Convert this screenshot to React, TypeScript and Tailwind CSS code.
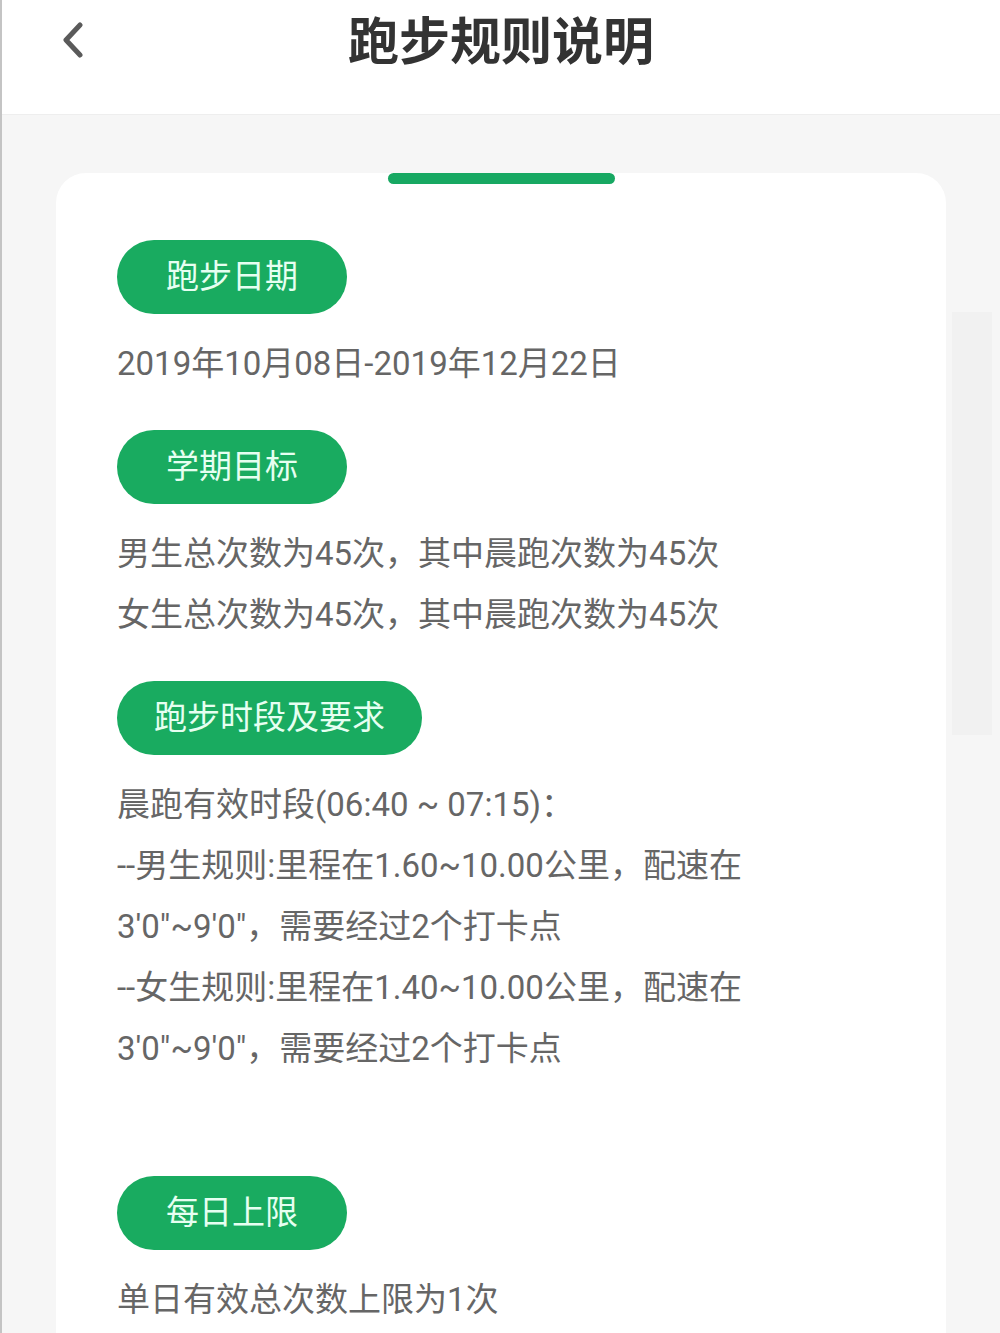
import React from "react";

const font = { fontFamily: '"Roboto", "Noto Sans CJK SC", sans-serif' };

const sections: { tag: string; wide?: boolean; lines: string[]; gapAfter?: boolean }[] = [
  { tag: "跑步日期", lines: ["2019年10月08日-2019年12月22日"] },
  { tag: "学期目标", lines: ["男生总次数为45次，其中晨跑次数为45次", "女生总次数为45次，其中晨跑次数为45次"] },
  {
    tag: "跑步时段及要求",
    wide: true,
    lines: [
      "晨跑有效时段(06:40 ~ 07:15)：",
      "--男生规则:里程在1.60~10.00公里，配速在",
      "3'0\"~9'0\"，需要经过2个打卡点",
      "--女生规则:里程在1.40~10.00公里，配速在",
      "3'0\"~9'0\"，需要经过2个打卡点",
    ],
    gapAfter: true,
  },
  { tag: "每日上限", lines: ["单日有效总次数上限为1次"] },
];

export default function App() {
  return (
    <div className="relative w-[1000px] h-[1333px] overflow-hidden bg-[#f6f6f6] border-l-2 border-[#c4c4c4]" style={font}>
      <header className="relative h-[115px] bg-white border-b border-[#eeeeee] flex items-center justify-center">
        <button className="absolute left-[58px] top-[22px] w-[26px] h-[36px] flex items-center justify-center">
          <svg width="24" height="36" viewBox="0 0 24 36" fill="none">
            <polyline points="19,3 5,18 19,33" stroke="#5a5a5a" strokeWidth="5" strokeLinecap="round" strokeLinejoin="round" />
          </svg>
        </button>
        <h1 className="text-[51px] font-bold text-[#333333] -mt-[28px]">跑步规则说明</h1>
      </header>

      {/* faint scroll track on the right */}
      <div className="absolute left-[950px] top-[312px] w-[40px] h-[423px] bg-[#f1f1f1]" />

      <main className="ml-[54px] mt-[58px] w-[890px] bg-white rounded-t-[30px] min-h-[1200px]">
        <div className="mx-auto w-[227px] h-[11px] rounded-full bg-[#17a862]" />
        <div className="pl-[61px] pt-[56px]">
          {sections.map((s, i) => (
            <section key={s.tag} className={i > 0 ? "mt-[36px]" : ""}>
              <div
                className={`${s.wide ? "w-[305px]" : "w-[230px]"} h-[74px] rounded-full bg-[#19ab60] flex items-center justify-center text-[33px] text-[#e6fff1]`}
              >
                {s.tag}
              </div>
              <div className="mt-[19px] text-[33px] leading-[61px] text-[#666666]">
                {s.lines.map((l) => (
                  <p key={l}>{l}</p>
                ))}
                {s.gapAfter && <p className="h-[61px]" />}
              </div>
            </section>
          ))}
        </div>
      </main>
    </div>
  );
}
